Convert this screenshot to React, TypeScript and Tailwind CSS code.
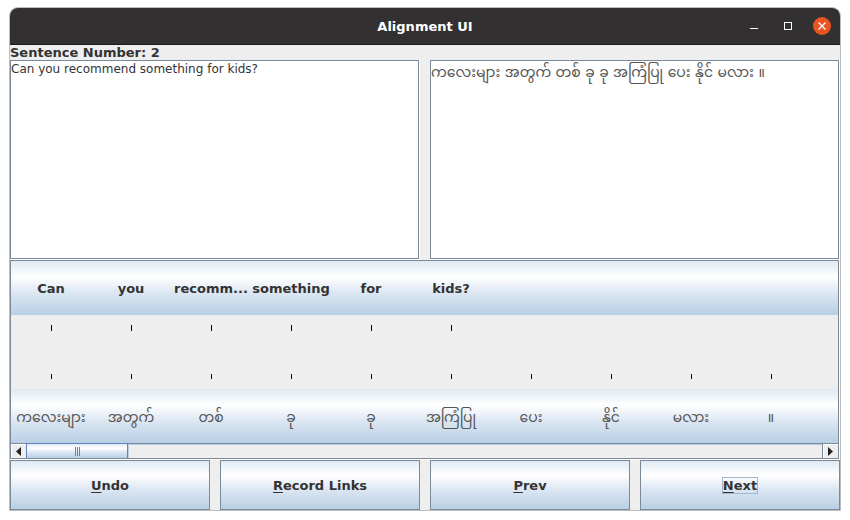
import React from "react";

const SOURCE_WORDS = ["Can", "you", "recomm...", "something", "for", "kids?"];
const TARGET_WORDS = ["ကလေးများ", "အတွက်", "တစ်", "ခု", "ခု", "အကြံပြု", "ပေး", "နိုင်", "မလား", "။"];

const ACTIONS = [
  { key: "U", rest: "ndo" },
  { key: "R", rest: "ecord Links" },
  { key: "P", rest: "rev" },
  { key: "N", rest: "ext", focused: true },
];

const METAL = "bg-[linear-gradient(to_bottom,#dfe9f3_0%,#ffffff_30%,#dbe6f2_60%,#b8cfe5_100%)]";

function TitleBar() {
  return (
    <header className="grid h-9 grid-cols-[1fr_auto_1fr] items-center rounded-t-lg bg-[#333031] px-[9px]">
      <h1 className="col-start-2 pt-[2px] text-[13px] font-bold text-white">Alignment UI</h1>
      <div className="flex items-center justify-end gap-4">
        <button type="button" aria-label="Minimize" className="flex size-[18px] items-center justify-center">
          <svg width="8" height="8" viewBox="0 0 8 8" shapeRendering="crispEdges">
            <rect y="6" width="8" height="1" fill="#fff" />
          </svg>
        </button>
        <button type="button" aria-label="Maximize" className="flex size-[18px] items-center justify-center">
          <svg width="8" height="8" viewBox="0 0 8 8" shapeRendering="crispEdges">
            <rect x="0.5" y="0.5" width="7" height="7" fill="none" stroke="#fff" />
          </svg>
        </button>
        <button type="button" aria-label="Close" className="flex size-[18px] items-center justify-center rounded-full bg-[#e95420]">
          <svg width="8" height="8" viewBox="0 0 8 8">
            <path d="M0.5 0.5 7.5 7.5M7.5 0.5 0.5 7.5" stroke="#fff" strokeWidth="1.3" fill="none" />
          </svg>
        </button>
      </div>
    </header>
  );
}

function SentenceBox({ label, text, lang }: { label: string; text: string; lang: string }) {
  return (
    <div className="border-r border-b border-white">
      <textarea
        aria-label={label}
        lang={lang}
        defaultValue={text}
        spellCheck={false}
        className={`block h-[199px] w-full resize-none border border-[#7a8a99] bg-white outline-none ${
          lang === "my" ? "text-[14px] leading-[22px] text-[#555]" : "text-[12px] leading-4 text-[#333]"
        }`}
      />
    </div>
  );
}

function WordRow({ words, lang }: { words: string[]; lang: string }) {
  return (
    <div lang={lang} className={`flex h-[54px] overflow-hidden ${METAL}`}>
      {words.map((word, i) => (
        <button
          type="button"
          key={i}
          className={`w-20 shrink-0 pt-[2px] text-center whitespace-nowrap ${
            lang === "my" ? "text-[14px] text-[#555]" : "text-[13px] font-bold text-[#333]"
          }`}
        >
          {word}
        </button>
      ))}
    </div>
  );
}

function Ticks({ count, height }: { count: number; height: string }) {
  return (
    <div className="flex overflow-hidden">
      {Array.from({ length: count }, (_, i) => (
        <div key={i} className="flex w-20 shrink-0 justify-center pl-px">
          <span className={`w-px bg-black ${height}`} />
        </div>
      ))}
    </div>
  );
}

function ScrollBar() {
  return (
    <div className="flex h-[14px] bg-[#eee]">
      <button type="button" aria-label="Scroll left" className="flex w-[15px] items-center justify-center border-t border-l border-white">
        <svg width="6" height="9" viewBox="0 0 6 9">
          <path d="M5 0V9L0 4.5Z" fill="#222" />
        </svg>
      </button>
      <div className={`-mt-px flex w-[102px] items-center justify-center gap-px border border-b-0 border-[#6382bf] ${METAL}`}>
        <span className="h-[9px] w-px bg-[#6382bf]" />
        <span className="h-[9px] w-px bg-[#6382bf]" />
        <span className="h-[9px] w-px bg-[#6382bf]" />
      </div>
      <div className="flex-1 border-t border-l border-[#b8cfe5]" />
      <button type="button" aria-label="Scroll right" className="flex w-4 items-center justify-center border-l border-[#7a8a99] bg-[#eee] shadow-[inset_1px_1px_0_#fff]">
        <svg width="5" height="9" viewBox="0 0 5 9">
          <path d="M0 0V9L5 4.5Z" fill="#222" />
        </svg>
      </button>
    </div>
  );
}

export default function App() {
  return (
    <div className="min-h-screen bg-white px-[9px] pt-[7px] pb-[9px] font-['DejaVu_Sans','Noto_Sans_Myanmar',sans-serif]">
      <div className="rounded-t-[9px] border border-[#bcbcbc] bg-[#eee]">
        <TitleBar />
        <main className="border-t border-[#1d1b1c]">
          <p className="h-[15px] text-[13px] leading-[15px] font-bold text-[#333]">Sentence Number: 2</p>
          <div className="grid grid-cols-2 gap-[10px]">
            <SentenceBox label="Source sentence" lang="en" text="Can you recommend something for kids?" />
            <SentenceBox label="Target sentence" lang="my" text="ကလေးများ အတွက် တစ် ခု ခု အကြံပြု ပေး နိုင် မလား ။" />
          </div>
          <div className="border-r border-b border-white">
            <section aria-label="Word alignment" className="border border-[#7a8a99]">
              <WordRow words={SOURCE_WORDS} lang="en" />
              <div className="flex h-[74px] flex-col justify-between py-[10px]">
                <Ticks count={SOURCE_WORDS.length} height="h-[6px]" />
                <Ticks count={TARGET_WORDS.length} height="h-[5px]" />
              </div>
              <WordRow words={TARGET_WORDS} lang="my" />
              <div className="border-t border-[#7a8a99]">
                <ScrollBar />
              </div>
            </section>
          </div>
          <div className="grid grid-cols-4 gap-[10px]">
            {ACTIONS.map(({ key, rest, focused }) => (
              <button
                type="button"
                key={key}
                className={`flex h-[50px] items-center justify-center border border-[#7a8a99] text-[13px] leading-[15px] font-bold text-[#333] ${METAL}`}
              >
                <span className={`border ${focused ? "border-[#a3b8cc]" : "border-transparent"}`}>
                  <span className="underline decoration-1 underline-offset-2">{key}</span>
                  {rest}
                </span>
              </button>
            ))}
          </div>
        </main>
      </div>
    </div>
  );
}
